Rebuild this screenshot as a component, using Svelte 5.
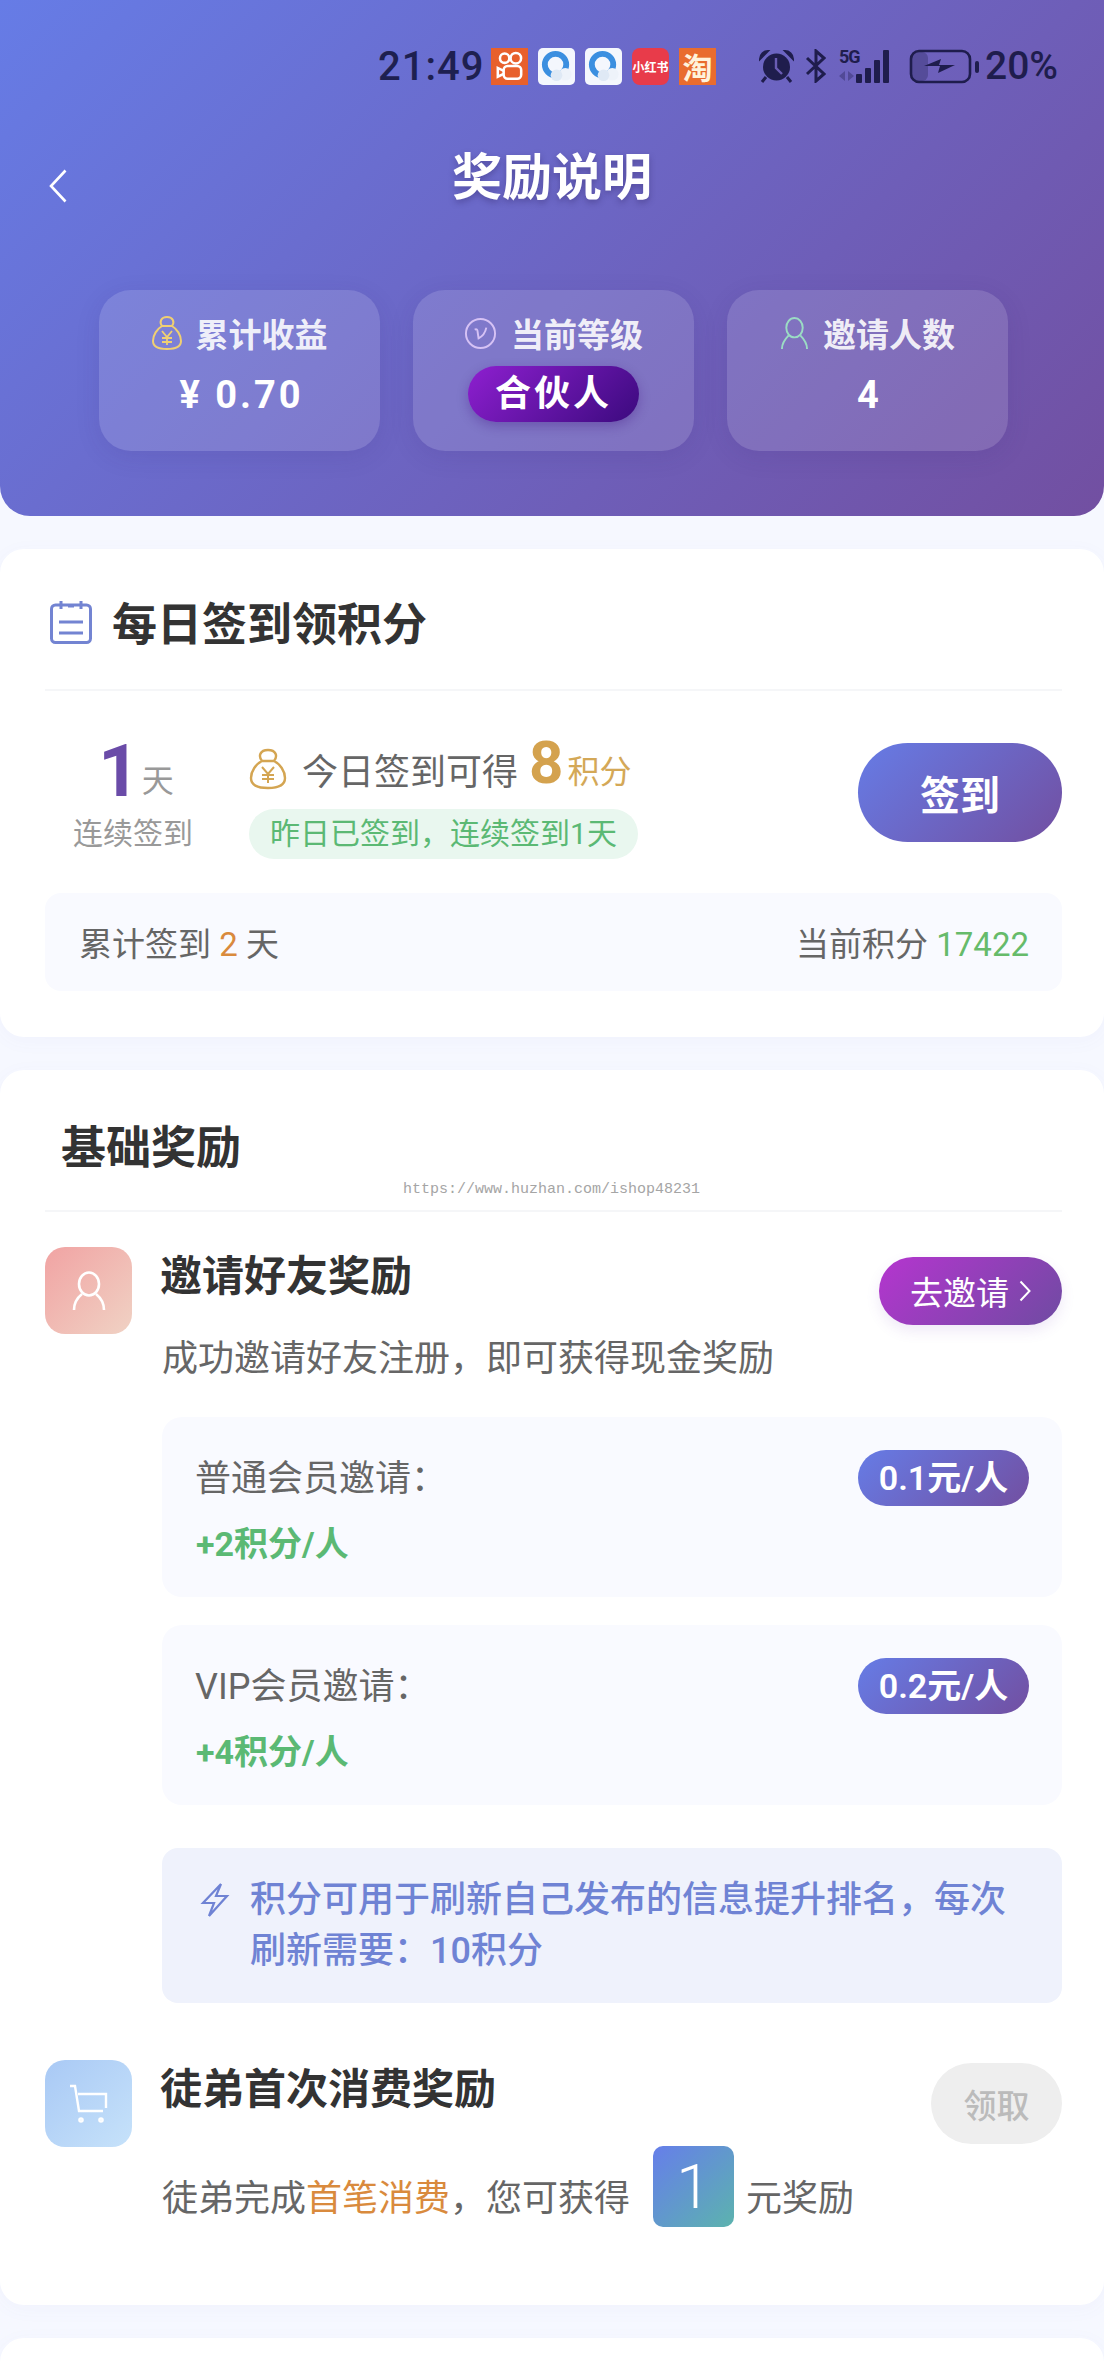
<script>
	const stats = [
		{ label: '累计收益', icon: 'bag', value: '¥ 0.70' },
		{ label: '当前等级', icon: 'level', badge: '合伙人' },
		{ label: '邀请人数', icon: 'user', value: '4' }
	];

	const inviteTiers = [
		{ name: '普通会员邀请：', price: '0.1元/人', points: '+2积分/人' },
		{ name: 'VIP会员邀请：', price: '0.2元/人', points: '+4积分/人' }
	];
</script>

<div class="page">
	<header class="hero">
		<div class="status">
			<span class="time">21:49</span>
			<div class="apps">
				<span class="app kuaishou">
					<svg viewBox="0 0 38 38" width="38" height="38" fill="none" stroke="#fff" stroke-width="2.6">
						<circle cx="14" cy="11" r="4.8" />
						<circle cx="25.5" cy="11" r="5.4" />
						<rect x="13" y="19" width="18" height="13" rx="4" />
						<path d="M13 24l-6-3v9l6-3" />
					</svg>
				</span>
				<span class="app qq">
					<svg viewBox="0 0 38 38" width="37" height="37">
						<circle cx="18" cy="17" r="11" fill="none" stroke="#3b8fe0" stroke-width="6" />
						<circle cx="28" cy="27" r="6.5" fill="#eef3fa" />
						<circle cx="19" cy="28" r="6" fill="#dfe9f5" />
					</svg>
				</span>
				<span class="app qq">
					<svg viewBox="0 0 38 38" width="37" height="37">
						<circle cx="18" cy="17" r="11" fill="none" stroke="#3b8fe0" stroke-width="6" />
						<circle cx="28" cy="27" r="6.5" fill="#eef3fa" />
						<circle cx="19" cy="28" r="6" fill="#dfe9f5" />
					</svg>
				</span>
				<span class="app redbook">小红书</span>
				<span class="app taobao">淘</span>
			</div>
			<div class="sys">
				<svg class="alarm" viewBox="0 0 35 33" width="35" height="33">
					<path d="M1 9c0-5 4-8 8-8L1 9zM34 9c0-5-4-8-8-8l8 8z" fill="#1f1d4d" stroke="#1f1d4d" stroke-width="2" />
					<circle cx="17.5" cy="17" r="13.5" fill="#1f1d4d" />
					<path d="M17 8v10l6 6" fill="none" stroke="#6a5cb4" stroke-width="2.4" />
					<path d="M7 27l-4 5M28 27l4 5" stroke="#1f1d4d" stroke-width="3" />
				</svg>
				<svg class="bt" viewBox="0 0 21 34" width="21" height="34" fill="none" stroke="#1f1d4d" stroke-width="3">
					<path d="M2 9l17 16-8 7V2l8 7L2 25" />
				</svg>
				<div class="signal">
					<span class="five-g">5G</span>
					<svg viewBox="0 0 58 34" width="58" height="34">
						<path d="M1 27l6-5v10zM10 22l6 5-6 5z" fill="#1f1d4d" opacity=".35" />
						<rect x="18" y="25" width="6" height="9" rx="1" fill="#1f1d4d" />
						<rect x="27" y="19" width="6" height="15" rx="1" fill="#1f1d4d" />
						<rect x="36" y="11" width="6" height="23" rx="1" fill="#1f1d4d" />
						<rect x="45" y="1" width="6" height="33" rx="1" fill="#1f1d4d" />
					</svg>
				</div>
				<svg class="battery" viewBox="0 0 70 35" width="70" height="35">
					<rect x="2" y="2" width="59" height="31" rx="8" fill="none" stroke="#1f1d4d" stroke-width="2.6" />
					<rect x="3" y="3" width="16" height="29" rx="6" fill="#1f1d4d" opacity=".3" />
					<path d="M15 17l17-7-2 6h16l-17 8 2-7z" fill="#1f1d4d" />
					<rect x="66" y="12" width="4" height="12" rx="2" fill="#1f1d4d" />
				</svg>
				<span class="percent">20%</span>
			</div>
		</div>

		<div class="nav">
			<svg class="back" viewBox="0 0 18 34" width="18" height="34" fill="none" stroke="#fff" stroke-width="2.6">
				<path d="M16.5 1.5L2 17l14.5 15.5" />
			</svg>
			<h1>奖励说明</h1>
		</div>

		<div class="stats">
			{#each stats as stat}
				<div class="stat">
					<div class="stat-label">
						{#if stat.icon === 'bag'}
							<svg viewBox="0 0 30 36" width="30" height="36" fill="none" stroke="#f0cf72" stroke-width="2">
								<path d="M10 11C7 7 9 2 15 2s8 5 5 9c5 3 9 9 9 15 0 6-5 8-14 8S1 32 1 26c0-6 4-12 9-15zM10 11h10" />
								<path d="M10 16l5 6 5-6M15 22v8M10 23h10M10 27h10" stroke-width="1.8" />
							</svg>
						{:else if stat.icon === 'level'}
							<svg viewBox="0 0 34 36" width="33" height="35" fill="none" stroke="#d6c2f5" stroke-width="2">
								<circle cx="17" cy="18" r="15" />
								<path d="M11 14c2-1 3 0 3 2l1 7c4-2 7-6 8-11" />
							</svg>
						{:else}
							<svg viewBox="0 0 30 36" width="29" height="35" fill="none" stroke="#9bdcc4" stroke-width="2">
								<ellipse cx="15" cy="12" rx="8.5" ry="10" />
								<path d="M9 20C5 24 2 29 2 34M21 20c4 4 7 9 7 14" />
							</svg>
						{/if}
						<span>{stat.label}</span>
					</div>
					{#if stat.badge}
						<span class="badge">{stat.badge}</span>
					{:else}
						<span class="stat-value">{stat.value}</span>
					{/if}
				</div>
			{/each}
		</div>
	</header>

	<section class="card sign-card">
		<div class="card-head">
			<svg viewBox="0 0 42 44" width="42" height="44" fill="none" stroke="#7384d2" stroke-width="3">
				<rect x="1.5" y="5" width="39" height="37.5" rx="4" />
				<path d="M11 1v8M31 1v8M18 6h6M9 22h24M9 33h24" />
			</svg>
			<h2>每日签到领积分</h2>
		</div>

		<div class="sign-row">
			<div class="streak">
				<div class="streak-count"><b>1</b><span>天</span></div>
				<div class="streak-label">连续签到</div>
			</div>
			<div class="today">
				<div class="today-line">
					<svg viewBox="0 0 38 42" width="38" height="42" fill="none" stroke="#d4a552" stroke-width="2.4">
						<path d="M13 13C9 8 11 2 19 2s10 6 6 11c6 3 11 10 11 17 0 7-6 10-17 10S2 37 2 30c0-7 5-14 11-17zM13 13h12" />
						<path d="M13 19l6 7 6-7M19 26v9M13 27h12M13 31h12" stroke-width="2" />
					</svg>
					<span class="today-text">今日签到可得</span>
					<b class="today-num">8</b>
					<span class="today-unit">积分</span>
				</div>
				<div class="yesterday">昨日已签到，连续签到1天</div>
			</div>
			<button class="sign-btn">签到</button>
		</div>

		<div class="summary">
			<span>累计签到 <em class="orange">2</em> 天</span>
			<span>当前积分 <em class="green">17422</em></span>
		</div>
	</section>

	<section class="card reward-card">
		<div class="plain-head">
			<h2>基础奖励</h2>
			<span class="watermark">https://www.huzhan.com/ishop48231</span>
		</div>

		<div class="reward">
			<div class="reward-icon pink">
				<svg viewBox="0 0 34 40" width="34" height="40" fill="none" stroke="#fff" stroke-width="2.6">
					<ellipse cx="17" cy="13" rx="10" ry="11.5" />
					<path d="M10 23C5 27 2 33 2 39M24 23c5 4 8 10 8 16" />
				</svg>
			</div>
			<div class="reward-body">
				<div class="reward-head">
					<h3>邀请好友奖励</h3>
					<button class="invite-btn">去邀请
						<svg viewBox="0 0 12 22" width="12" height="22" fill="none" stroke="#fff" stroke-width="2">
							<path d="M1.5 1.5L10.5 11l-9 9.5" />
						</svg>
					</button>
				</div>
				<p class="desc">成功邀请好友注册，即可获得现金奖励</p>

				<div class="tiers">
					{#each inviteTiers as tier}
						<div class="tier">
							<div class="tier-top">
								<span class="tier-name">{tier.name}</span>
								<span class="price">{tier.price}</span>
							</div>
							<div class="points">{tier.points}</div>
						</div>
					{/each}
				</div>

				<div class="tip">
					<svg viewBox="0 0 30 34" width="30" height="34" fill="none" stroke="#6f83d4" stroke-width="2.2">
						<path d="M21 1L3 20h11L9 33l18-20H16z" />
					</svg>
					<p>积分可用于刷新自己发布的信息提升排名，每次刷新需要：10积分</p>
				</div>
			</div>
		</div>

		<div class="reward second">
			<div class="reward-icon blue">
				<svg viewBox="0 0 40 40" width="40" height="40" fill="none" stroke="#fff" stroke-width="2.4">
					<path d="M1 2h5l4 25h24M9 10h28v14" />
					<circle cx="12" cy="36" r="1.6" />
					<circle cx="32" cy="36" r="1.6" />
				</svg>
			</div>
			<div class="reward-body">
				<div class="reward-head">
					<h3>徒弟首次消费奖励</h3>
					<button class="claim-btn" disabled>领取</button>
				</div>
				<div class="first-desc">
					<span>徒弟完成<em class="orange">首笔消费</em>，您可获得</span>
					<span class="chip">1</span>
					<span>元奖励</span>
				</div>
			</div>
		</div>
	</section>

	<section class="card tail"></section>
</div>

<style>
	:global(body) {
		margin: 0;
		background: #f6f8ff;
		font-family: Roboto, 'Noto Sans CJK SC', sans-serif;
	}

	.page {
		position: relative;
		width: 1104px;
		height: 2376px;
		overflow: hidden;
		background: #f6f8ff;
		color: #333;
	}

	h1,
	h2,
	h3,
	p {
		margin: 0;
	}

	em {
		font-style: normal;
	}

	button {
		appearance: none;
		border: 0;
		font-family: inherit;
		padding: 0;
	}

	.orange {
		color: #d98a3d;
	}

	.green {
		color: #66bb6a;
	}

	.hero {
		height: 516px;
		box-sizing: border-box;
		padding-top: 47px;
		background: linear-gradient(135deg, #667ce6, #724fa1);
		border-radius: 0 0 30px 30px;
	}

	.status {
		display: flex;
		align-items: center;
		height: 38px;
		padding-left: 378px;
		color: #1f1d4d;
	}

	.time {
		width: 113px;
		font-size: 40px;
		font-weight: 500;
		letter-spacing: 1px;
		color: #1e2050;
	}

	.apps {
		display: flex;
		gap: 10px;
	}

	.app {
		display: flex;
		align-items: center;
		justify-content: center;
		width: 37px;
		height: 37px;
		color: #fff;
		overflow: hidden;
	}

	.kuaishou {
		background: #e8602c;
	}

	.qq {
		background: #f4f7fd;
		border-radius: 5px;
	}

	.redbook {
		background: #e83b4a;
		border-radius: 8px;
		font-size: 12px;
		font-weight: 700;
		white-space: nowrap;
	}

	.taobao {
		background: #e96c2e;
		font-size: 30px;
		font-weight: 700;
		color: #fff3dc;
	}

	.sys {
		display: flex;
		align-items: center;
		margin-left: 43px;
	}

	.bt {
		margin-left: 11px;
	}

	.signal {
		position: relative;
		flex: none;
		width: 58px;
		height: 34px;
		margin-left: 12px;
	}

	.five-g {
		position: absolute;
		top: -2px;
		left: 1px;
		font-size: 18px;
		line-height: 20px;
		font-weight: 700;
		letter-spacing: -1px;
		z-index: 1;
	}

	.signal svg {
		position: absolute;
		left: 0;
		top: 0;
	}

	.battery {
		flex: none;
		margin-left: 13px;
	}

	.percent {
		margin-left: 6px;
		font-size: 39px;
		font-weight: 500;
	}

	.nav {
		display: flex;
		align-items: center;
		justify-content: center;
		position: relative;
		height: 70px;
		margin-top: 58px;
	}

	.back {
		position: absolute;
		left: 49px;
		top: 26px;
	}

	h1 {
		font-size: 50px;
		line-height: 70px;
		font-weight: 700;
		color: #fff;
		text-shadow: 0 3px 6px rgba(40, 30, 90, 0.35);
	}

	.stats {
		display: flex;
		gap: 33px;
		margin-top: 77px;
		padding-left: 99px;
	}

	.stat {
		display: flex;
		flex-direction: column;
		align-items: center;
		width: 281px;
		height: 161px;
		box-sizing: border-box;
		padding-top: 22px;
		background: rgba(255, 255, 255, 0.13);
		border-radius: 32px;
		box-shadow: 0 6px 24px rgba(60, 40, 120, 0.12);
	}

	.stat-label {
		display: flex;
		align-items: center;
		gap: 14px;
		height: 42px;
		font-size: 33px;
		font-weight: 600;
		color: rgba(255, 255, 255, 0.9);
	}

	.stat-value {
		margin-top: 18px;
		margin-left: 4px;
		font-size: 38px;
		line-height: 46px;
		font-weight: 700;
		letter-spacing: 3px;
		color: #fff;
	}

	.badge {
		width: 171px;
		height: 56px;
		margin-top: 12px;
		border-radius: 28px;
		background: linear-gradient(135deg, #8e1fd0, #3b0a7e);
		box-shadow: 0 4px 12px rgba(60, 10, 120, 0.3);
		text-align: center;
		font-size: 36px;
		line-height: 56px;
		font-weight: 700;
		letter-spacing: 3px;
		color: #fff;
	}

	.card {
		margin-top: 33px;
		background: #fff;
		border-radius: 24px;
		padding: 0 42px 0 45px;
		box-shadow: 0 4px 20px rgba(90, 110, 200, 0.04);
	}

	.sign-card {
		height: 488px;
		box-sizing: border-box;
	}

	.card-head {
		display: flex;
		align-items: center;
		gap: 20px;
		height: 135px;
		padding: 5px 0 0 5px;
		border-bottom: 2px solid #f5f6f8;
	}

	h2 {
		font-size: 45px;
		font-weight: 700;
		color: #333;
	}

	.sign-row {
		display: flex;
		align-items: flex-start;
		padding-top: 50px;
	}

	.streak {
		width: 176px;
		text-align: center;
	}

	.streak-count {
		display: flex;
		align-items: flex-end;
		justify-content: center;
		gap: 2px;
		height: 62px;
		padding-left: 6px;
		color: #999;
		font-size: 32px;
		line-height: 44px;
	}

	.streak-count b {
		font-size: 72px;
		line-height: 62px;
		color: #6a4ba8;
	}

	.streak-label {
		margin-top: 10px;
		font-size: 30px;
		line-height: 42px;
		color: #999;
	}

	.today {
		margin-left: 28px;
	}

	.today-line {
		display: flex;
		align-items: center;
		height: 56px;
	}

	.today-text {
		margin-left: 15px;
		font-size: 36px;
		color: #666;
	}

	.today-num {
		margin-left: 11px;
		font-size: 60px;
		line-height: 56px;
		color: #d4a24e;
		transform: translateY(-6px);
	}

	.today-unit {
		margin-left: 4px;
		font-size: 32px;
		color: #d4a857;
	}

	.yesterday {
		width: 389px;
		height: 50px;
		margin-top: 12px;
		border-radius: 25px;
		background: #e9f7ef;
		text-align: center;
		font-size: 30px;
		line-height: 50px;
		color: #5bb974;
	}

	.sign-btn {
		width: 204px;
		height: 99px;
		margin-left: auto;
		margin-top: 2px;
		border-radius: 50px;
		background: linear-gradient(135deg, #667ce6, #724fa1);
		font-size: 40px;
		font-weight: 700;
		color: #fff;
	}

	.summary {
		display: flex;
		justify-content: space-between;
		align-items: center;
		height: 98px;
		margin-top: 34px;
		padding: 0 33px 0 34px;
		background: #f9faff;
		border-radius: 16px;
		font-size: 33px;
		color: #666;
	}

	.reward-card {
		height: 1235px;
		box-sizing: border-box;
	}

	.plain-head {
		position: relative;
		height: 140px;
		display: flex;
		align-items: center;
		padding-left: 16px;
		border-bottom: 2px solid #f5f6f8;
	}

	.plain-head h2 {
		margin-top: 8px;
	}

	.watermark {
		position: absolute;
		left: 358px;
		top: 111px;
		font-family: 'Liberation Mono', monospace;
		font-size: 15px;
		color: #a5a5a5;
		white-space: nowrap;
	}

	.reward {
		display: grid;
		grid-template-columns: 87px 1fr;
		column-gap: 30px;
		padding-top: 35px;
	}

	.reward.second {
		padding-top: 57px;
	}

	.reward-icon {
		display: flex;
		align-items: center;
		justify-content: center;
		width: 87px;
		height: 87px;
		border-radius: 20px;
	}

	.pink {
		background: linear-gradient(135deg, #f1a3a3, #f0d2c4);
	}

	.blue {
		background: linear-gradient(135deg, #a9c9f5, #c6e2fa);
	}

	.reward-head {
		display: flex;
		justify-content: space-between;
		align-items: flex-start;
	}

	h3 {
		margin-left: -2px;
		font-size: 42px;
		line-height: 60px;
		font-weight: 700;
		color: #333;
	}

	.invite-btn {
		display: flex;
		align-items: center;
		justify-content: center;
		gap: 10px;
		width: 183px;
		height: 68px;
		margin-top: 10px;
		border-radius: 34px;
		background: linear-gradient(135deg, #b535cf, #6f4ba2);
		box-shadow: 0 6px 14px rgba(120, 70, 190, 0.12);
		font-size: 33px;
		color: #fff;
	}

	.claim-btn {
		width: 131px;
		height: 81px;
		margin-top: 3px;
		border-radius: 41px;
		background: #eeeeee;
		font-size: 33px;
		font-weight: 500;
		color: #bbb;
	}

	.desc {
		margin-top: 9px;
		font-size: 36px;
		line-height: 50px;
		color: #666;
	}

	.tiers {
		display: flex;
		flex-direction: column;
		gap: 28px;
		margin-top: 33px;
	}

	.tier {
		height: 180px;
		box-sizing: border-box;
		padding: 33px 33px 0 34px;
		background: #f9faff;
		border-radius: 20px;
	}

	.tier-top {
		display: flex;
		justify-content: space-between;
		align-items: flex-start;
		height: 56px;
		font-size: 36px;
		color: #666;
	}

	.tier-name {
		margin-left: -1px;
		line-height: 58px;
	}

	.price {
		width: 171px;
		height: 56px;
		border-radius: 28px;
		background: linear-gradient(135deg, #667ce6, #724fa1);
		text-align: center;
		font-size: 34px;
		line-height: 56px;
		font-weight: 600;
		color: #fff;
	}

	.points {
		margin-top: 16px;
		font-size: 34px;
		line-height: 44px;
		font-weight: 700;
		color: #5bb974;
	}

	.tip {
		display: flex;
		align-items: flex-start;
		gap: 20px;
		height: 155px;
		box-sizing: border-box;
		margin-top: 43px;
		padding: 27px 33px 0 38px;
		background: #eff2fc;
		border-radius: 16px;
	}

	.tip svg {
		flex: none;
		margin-top: 8px;
	}

	.tip p {
		font-size: 36px;
		line-height: 51px;
		font-weight: 500;
		color: #6f83d4;
	}

	.first-desc {
		display: flex;
		align-items: center;
		margin-top: 2px;
		font-size: 36px;
		color: #666;
	}

	.chip {
		width: 81px;
		height: 81px;
		margin: 0 12px 16px 23px;
		border-radius: 10px;
		background: linear-gradient(135deg, #667eea, #5cb3ae);
		text-align: center;
		font-size: 62px;
		line-height: 81px;
		font-weight: 300;
		color: #fff;
	}

	.tail {
		height: 200px;
	}
</style>
